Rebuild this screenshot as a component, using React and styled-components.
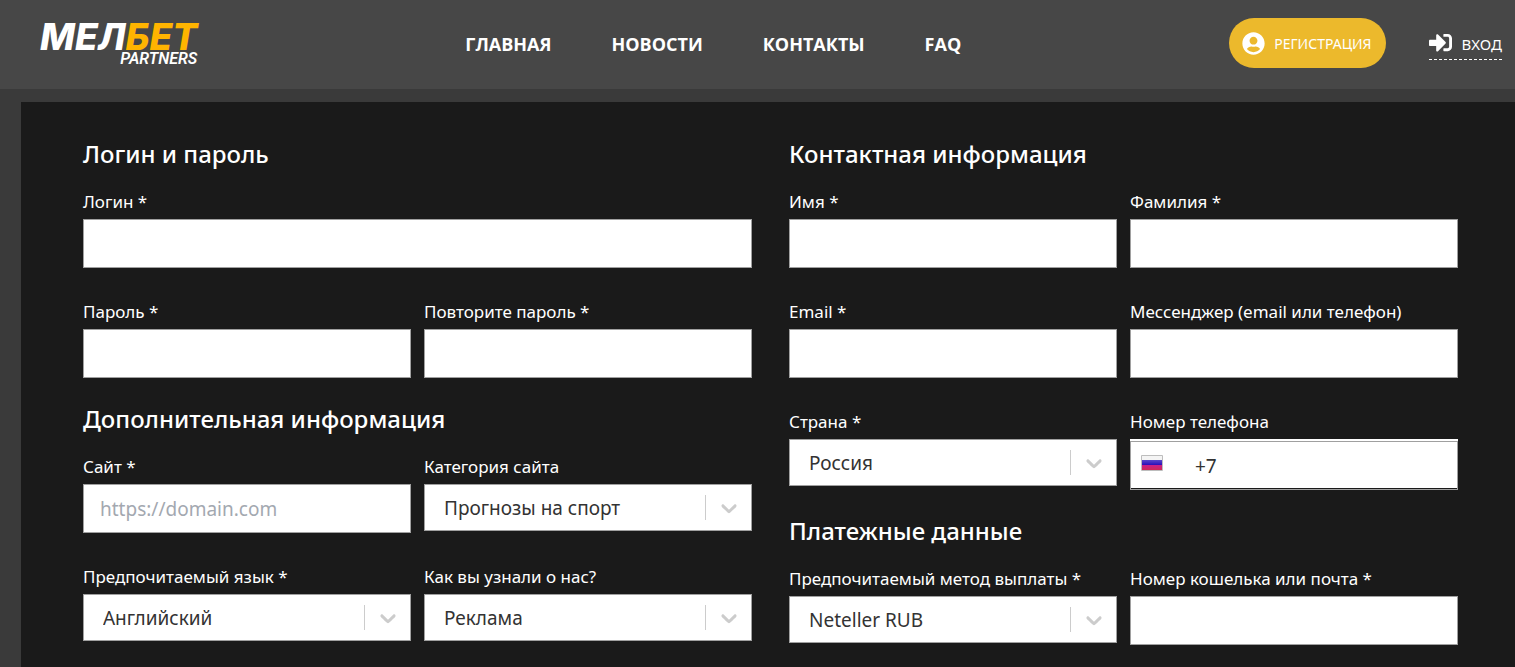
import React from "react"
import styled, { createGlobalStyle } from "styled-components"
import { FaSignInAlt, FaUserCircle } from "react-icons/fa"

const navLinks = ["ГЛАВНАЯ", "НОВОСТИ", "КОНТАКТЫ", "FAQ"]

const TextField = ({ id, label, wide, ...rest }) => (
  <Field $wide={wide}>
    <Label htmlFor={id}>{label}</Label>
    <Input id={id} name={id} {...rest} />
  </Field>
)

const SelectField = ({ id, label, options }) => (
  <Field>
    <Label htmlFor={id}>{label}</Label>
    <SelectBox>
      <Select id={id} name={id}>
        {options.map((option) => (
          <option key={option}>{option}</option>
        ))}
      </Select>
      <Indicator>
        <Chevron viewBox="0 0 20 20" aria-hidden="true">
          <path d="M4.516 7.548c0.436-0.446 1.043-0.481 1.576 0l3.908 3.747 3.908-3.747c0.533-0.481 1.141-0.446 1.574 0 0.436 0.445 0.408 1.197 0 1.615-0.406 0.418-4.695 4.502-4.695 4.502-0.217 0.223-0.502 0.335-0.787 0.335s-0.57-0.112-0.789-0.335c0 0-4.287-4.084-4.695-4.502s-0.436-1.17 0-1.615z" />
        </Chevron>
      </Indicator>
    </SelectBox>
  </Field>
)

const PhoneField = ({ id, label }) => (
  <Field>
    <Label htmlFor={id}>{label}</Label>
    <PhoneBox>
      <Flag viewBox="0 0 22 16" aria-hidden="true">
        <defs>
          <linearGradient id="blue" x1="0" y1="0" x2="0" y2="1">
            <stop offset="0" stopColor="#5a48cc" />
            <stop offset="1" stopColor="#2a0fb8" />
          </linearGradient>
          <linearGradient id="red" x1="0" y1="0" x2="0" y2="1">
            <stop offset="0" stopColor="#c8208a" />
            <stop offset="1" stopColor="#cf2a55" />
          </linearGradient>
        </defs>
        <rect width="22" height="16" rx="1" fill="#bdbdbd" />
        <rect x="1" y="1" width="20" height="4" fill="#f4f4f4" />
        <rect x="1" y="5" width="20" height="5" fill="url(#blue)" />
        <rect x="1" y="10" width="20" height="5" fill="url(#red)" />
      </Flag>
      <PhoneInput id={id} name={id} type="tel" defaultValue="+7" />
    </PhoneBox>
  </Field>
)

const App = () => {
  return (
    <Page>
      <GlobalStyle />
      <Header>
        <Logo href="#">
          <LogoName>
            МЕЛ<LogoAccent>БЕТ</LogoAccent>
          </LogoName>
          <LogoSub>PARTNERS</LogoSub>
        </Logo>
        <Nav>
          {navLinks.map((link) => (
            <NavLink key={link} href="#">
              {link}
            </NavLink>
          ))}
        </Nav>
        <Actions>
          <RegisterButton type="button">
            <FaUserCircle size={23} />
            РЕГИСТРАЦИЯ
          </RegisterButton>
          <LoginLink href="#">
            <FaSignInAlt size={23} />
            <LoginText>ВХОД</LoginText>
          </LoginLink>
        </Actions>
      </Header>
      <Form>
        <Column>
          <section>
            <Title>Логин и пароль</Title>
            <Fields>
              <TextField id="login" label="Логин *" wide />
              <TextField id="password" label="Пароль *" type="password" />
              <TextField id="repeat" label="Повторите пароль *" type="password" />
            </Fields>
          </section>
          <section>
            <Title>Дополнительная информация</Title>
            <Fields>
              <TextField id="site" label="Сайт *" placeholder="https://domain.com" />
              <SelectField id="category" label="Категория сайта" options={["Прогнозы на спорт"]} />
              <SelectField id="language" label="Предпочитаемый язык *" options={["Английский"]} />
              <SelectField id="source" label="Как вы узнали о нас?" options={["Реклама"]} />
            </Fields>
          </section>
        </Column>
        <Column>
          <section>
            <Title>Контактная информация</Title>
            <Fields>
              <TextField id="name" label="Имя *" />
              <TextField id="surname" label="Фамилия *" />
              <TextField id="email" label="Email *" type="email" />
              <TextField id="messenger" label="Мессенджер (email или телефон)" />
              <SelectField id="country" label="Страна *" options={["Россия"]} />
              <PhoneField id="phone" label="Номер телефона" />
            </Fields>
          </section>
          <section>
            <Title>Платежные данные</Title>
            <Fields>
              <SelectField id="method" label="Предпочитаемый метод выплаты *" options={["Neteller RUB"]} />
              <TextField id="wallet" label="Номер кошелька или почта *" />
            </Fields>
          </section>
        </Column>
      </Form>
    </Page>
  )
}

export default App

const GlobalStyle = createGlobalStyle`
  * {
    box-sizing: border-box;
  }

  body {
    margin: 0;
    background: #3a3a3a;
    color: #fff;
    font-family: "Noto Sans", sans-serif;
  }

  a {
    color: inherit;
    text-decoration: none;
  }
`

const Page = styled.div`
  min-height: 100vh;
  display: flex;
  flex-direction: column;
`

// Header

const Header = styled.header`
  display: flex;
  align-items: center;
  justify-content: space-between;
  height: 89px;
  padding: 0 13px 3px 40px;
  background: #474747;
`

const Logo = styled.a`
  display: flex;
  flex-direction: column;
  align-items: flex-end;
  padding-top: 3px;
  font-family: Roboto, sans-serif;
  font-style: italic;
`

const LogoName = styled.span`
  font-family: Inter, sans-serif;
  font-size: 37px;
  line-height: 29px;
  font-weight: 800;
`

const LogoAccent = styled.span`
  color: #ffb400;
`

const LogoSub = styled.span`
  font-size: 16px;
  line-height: 16px;
  font-weight: 600;
`

const Nav = styled.nav`
  display: flex;
  gap: 60px;
  padding-top: 2px;
`

const NavLink = styled.a`
  font-family: "Open Sans", sans-serif;
  font-size: 18px;
  line-height: 24px;
  font-weight: 700;
`

const Actions = styled.div`
  display: flex;
  align-items: center;
  gap: 43px;
`

const RegisterButton = styled.button`
  display: flex;
  align-items: center;
  gap: 9px;
  height: 50px;
  padding: 0 14px 0 13px;
  border: none;
  border-radius: 25px;
  background: #ecb92c;
  color: #fff;
  font-family: inherit;
  font-size: 14px;
`

const LoginLink = styled.a`
  display: flex;
  align-items: center;
  gap: 10px;
  height: 34px;
  border-bottom: 1px dashed #fff;
`

const LoginText = styled.span`
  padding-top: 2px;
  font-size: 15px;
`

// Form

const Form = styled.form`
  flex: 1;
  display: grid;
  grid-template-columns: 1fr 1fr;
  column-gap: 37px;
  margin: 13px 0 0 21px;
  padding: 38px 57px 22px 62px;
  background: #1a1a1a;
`

const Column = styled.div`
  display: flex;
  flex-direction: column;
  gap: 27px;
`

const Title = styled.h2`
  margin: 0 0 22px;
  font-size: 24px;
  line-height: 28px;
  font-weight: 500;
`

const Fields = styled.div`
  display: grid;
  grid-template-columns: 1fr 1fr;
  gap: 32px 13px;
`

const Field = styled.div`
  display: flex;
  flex-direction: column;
  gap: 5px;
  min-width: 0;
  grid-column: ${(props) => (props.$wide ? "1 / -1" : "auto")};
`

const Label = styled.label`
  font-size: 17px;
  line-height: 24px;
`

const Input = styled.input`
  width: 100%;
  height: 49px;
  padding: 0 16px;
  border: 1px solid #a0a0a0;
  border-radius: 0;
  background: #fff;
  color: #333;
  font-family: inherit;
  font-size: 19px;

  &::placeholder {
    color: #a3a8b0;
  }
`

const SelectBox = styled.div`
  position: relative;
`

const Select = styled.select`
  display: block;
  width: 100%;
  height: 47px;
  padding: 0 48px 0 19px;
  border: 1px solid #a0a0a0;
  border-radius: 0;
  background: #fff;
  color: #333;
  font-family: inherit;
  font-size: 19px;
  appearance: none;
`

const Indicator = styled.span`
  position: absolute;
  top: 11px;
  right: 1px;
  bottom: 11px;
  width: 46px;
  display: flex;
  align-items: center;
  justify-content: center;
  border-left: 1px solid #ccc;
  pointer-events: none;
`

const Chevron = styled.svg`
  width: 26px;
  height: 26px;
  fill: #ccc;
`

const PhoneBox = styled.div`
  position: relative;
  padding-top: 2px;
  background: linear-gradient(#fff, #fff) no-repeat top / 100% calc(100% - 2px);
`

const Flag = styled.svg`
  position: absolute;
  left: 11px;
  top: 16px;
  width: 22px;
  height: 16px;
`

const PhoneInput = styled(Input)`
  display: block;
  padding-left: 64px;
  background: transparent;
`
